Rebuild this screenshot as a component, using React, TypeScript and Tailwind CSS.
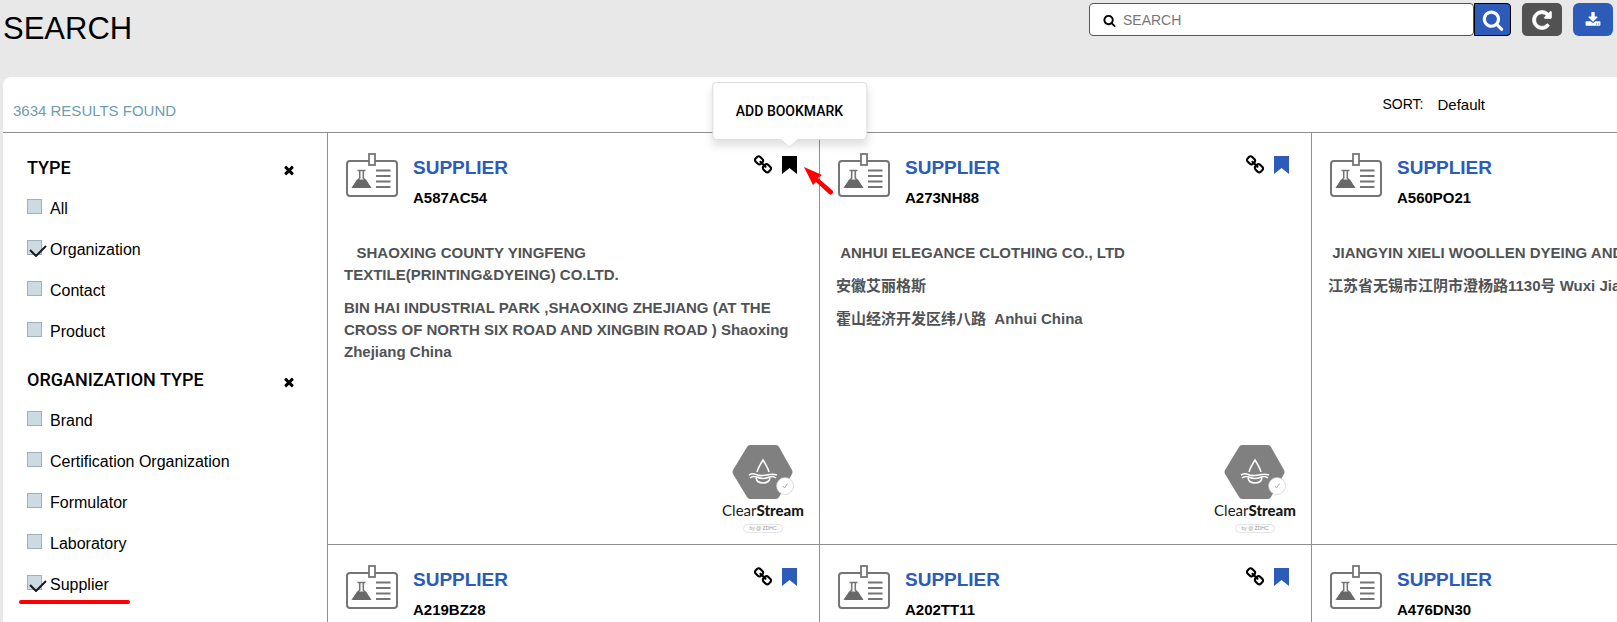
import type { ReactNode } from 'react';

const icons = {
  times:
    'M1490 1322q0 40-28 68l-136 136q-28 28-68 28t-68-28l-294-294-294 294q-28 28-68 28t-68-28l-136-136q-28-28-28-68t28-68l294-294-294-294q-28-28-28-68t28-68l136-136q28-28 68-28t68 28l294 294 294-294q28-28 68-28t68 28l136 136q28 28 28 68t-28 68l-294 294 294 294q28 28 28 68z',
  search:
    'M1216 832q0-185-131.5-316.5t-316.5-131.5-316.5 131.5-131.5 316.5 131.5 316.5 316.5 131.5 316.5-131.5 131.5-316.5zm512 832q0 52-38 90t-90 38q-54 0-90-38l-343-342q-179 124-399 124-143 0-273.5-55.5t-225-150-150-225-55.5-273.5 55.5-273.5 150-225 225-150 273.5-55.5 273.5 55.5 225 150 150 225 55.5 273.5q0 220-124 399l343 343q37 37 37 90z',
  reload:
    'M1664 256v448q0 26-19 45t-45 19h-448q-42 0-59-40-17-39 14-69l138-138q-148-137-349-137-104 0-198.5 40.5t-163.5 109.5-109.5 163.5-40.5 198.5 40.5 198.5 109.5 163.5 163.5 109.5 198.5 40.5q119 0 225-52t179-147q7-10 23-12 15 0 25 9l137 138q9 8 9.5 20.5t-7.5 22.5q-109 132-264 204.5t-327 72.5q-156 0-298-61t-245-164-164-245-61-298 61-298 164-245 245-164 298-61q147 0 284.5 55.5t244.5 156.5l130-129q29-31 70-14 39 17 39 59z',
  download:
    'M1344 1344q0-26-19-45t-45-19-45 19-19 45 19 45 45 19 45-19 19-45zm256 0q0-26-19-45t-45-19-45 19-19 45 19 45 45 19 45-19 19-45zm128-224v320q0 40-28 68t-68 28h-1472q-40 0-68-28t-28-68v-320q0-40 28-68t68-28h465l135 136q58 56 136 56t136-56l136-136h464q40 0 68 28t28 68zm-325-569q17 41-14 70l-448 448q-18 19-45 19t-45-19l-448-448q-31-29-14-70 17-39 59-39h256v-448q0-26 19-45t45-19h256q26 0 45 19t19 45v448h256q42 0 59 39z',
  link:
    'M1520 1216q0-40-28-68l-208-208q-28-28-68-28-42 0-72 32 3 3 19 18.5t21.5 21.5 15 19 13 25.5 3.5 27.5q0 40-28 68t-68 28q-15 0-27.5-3.5t-25.5-13-19-15-21.5-21.5-18.5-19q-33 31-33 73 0 40 28 68l206 207q27 27 68 27 40 0 68-26l147-146q28-28 28-67zm-703-705q0-40-28-68l-206-207q-28-28-68-28-39 0-68 27l-147 146q-28 28-28 67 0 40 28 68l208 208q27 27 68 27 42 0 72-31-3-3-19-18.5t-21.5-21.5-15-19-13-25.5-3.5-27.5q0-40 28-68t68-28q15 0 27.5 3.5t25.5 13 19 15 21.5 21.5 18.5 19q33-31 33-73zm895 705q0 120-85 203l-147 146q-83 83-203 83-121 0-204-85l-206-207q-83-83-83-203 0-123 88-209l-88-88q-86 88-208 88-120 0-204-84l-208-208q-84-84-84-204t85-203l147-146q83-83 203-83 121 0 204 85l206 207q83 83 83 203 0 123-88 209l88 88q86-88 208-88 120 0 204 84l208 208q84 84 84 204z',
};

const filters = [
  {
    title: 'TYPE',
    options: [
      { label: 'All' },
      { label: 'Organization', checked: true },
      { label: 'Contact' },
      { label: 'Product' },
    ],
  },
  {
    title: 'ORGANIZATION TYPE',
    options: [
      { label: 'Brand' },
      { label: 'Certification Organization' },
      { label: 'Formulator' },
      { label: 'Laboratory' },
      { label: 'Supplier', checked: true, marked: true },
    ],
  },
];

type Supplier = {
  id: string;
  lines?: string[];
  certified?: boolean;
  hovered?: boolean;
};

const suppliers: Supplier[] = [
  {
    id: 'A587AC54',
    lines: [
      '\u00a0\u00a0 SHAOXING COUNTY YINGFENG TEXTILE(PRINTING&DYEING) CO.LTD.',
      'BIN HAI INDUSTRIAL PARK ,SHAOXING ZHEJIANG (AT THE CROSS OF NORTH SIX ROAD AND XINGBIN ROAD ) Shaoxing Zhejiang China',
    ],
    certified: true,
    hovered: true,
  },
  {
    id: 'A273NH88',
    lines: ['\u00a0ANHUI ELEGANCE CLOTHING CO., LTD', '安徽艾丽格斯', '霍山经济开发区纬八路\u00a0 Anhui China'],
    certified: true,
  },
  {
    id: 'A560PO21',
    lines: ['\u00a0JIANGYIN XIELI WOOLLEN DYEING AND', '江苏省无锡市江阴市澄杨路1130号 Wuxi Jiangsu'],
  },
  { id: 'A219BZ28' },
  { id: 'A202TT11' },
  { id: 'A476DN30' },
];

function Icon({ name, className }: { name: keyof typeof icons; className: string }) {
  return (
    <svg viewBox="0 0 1792 1792" fill="currentColor" className={className} aria-hidden="true">
      <path d={icons[name]} />
    </svg>
  );
}

function BadgeIcon() {
  return (
    <svg viewBox="0 0 52 46" className="h-[46px] w-[52px] shrink-0" fill="none" stroke="#757575" aria-hidden="true">
      <rect x="1" y="8" width="50" height="35" rx="3" strokeWidth="2" />
      <rect x="23" y="1" width="6" height="11" fill="#fff" strokeWidth="1.8" />
      <path d="M11.500 17.500h8M13.700 18v7L7 34h17l-6.700-9v-7" strokeWidth="1.600" />
      <path d="M11 26.500h9L25 35H6z" fill="#686868" stroke="none" />
      <path d="M30 17.500h14.500M30 23h14.500M30 28.500h14.500M30 34h14.500" strokeWidth="2" />
    </svg>
  );
}

function ClearStreamLogo() {
  return (
    <div className="flex w-20 flex-col items-center">
      <svg viewBox="0 0 62 56" className="h-14 w-[62px]" fill="none" aria-hidden="true">
        <path d="M18 1h26q2 0 3 2l13 23q1 2 0 4L47 53q-1 2-3 2H18q-2 0-3-2L1 30q-1-2 0-4L15 3q1-2 3-2z" fill="#808080" />
        <g stroke="#fff" strokeWidth="1.500">
          <path d="M25 28q1-4 6-12 5 8 6 12M24 34q1 5 7 5t7-5" />
          <path d="M17 31q4-2 7-.5t7 1 7-1 7 .5M18 34q3-2.500 6.500-1t6.500 1.500 6.500-1.500 6.500 1" />
        </g>
        <circle cx="53" cy="42" r="8.500" fill="#fff" stroke="#bbb" strokeWidth=".5" />
        <path d="M51 42l1.500 2 3-4.500" stroke="#999" strokeWidth=".8" />
      </svg>
      <p className="font-['Lato'] text-[15px] leading-5 text-[#1a1a1a]">
        Clear<b className="font-black">Stream</b>
      </p>
      <p className="mt-1 rounded-full border border-[#e4e4e4] px-[5px] text-[5px] leading-[7px] text-[#999]">by @ ZDHC</p>
    </div>
  );
}

function Filter({ title, children }: { title: string; children: ReactNode }) {
  return (
    <fieldset className="pb-4">
      <div className="flex items-center justify-between pr-[31px]">
        <h2 className="font-['Roboto'] text-[18px] leading-6 font-medium">{title}</h2>
        <button type="button" aria-label={`Clear ${title}`} className="pt-1">
          <Icon name="times" className="size-[14px]" />
        </button>
      </div>
      <div className="mt-2">{children}</div>
    </fieldset>
  );
}

function Option({ label, checked, marked }: { label: string; checked?: boolean; marked?: boolean }) {
  return (
    <label className="relative flex h-[41px] items-center gap-2 text-base">
      <span className="relative mb-1 size-[15px]">
        <input
          type="checkbox"
          defaultChecked={checked}
          className="peer block size-[15px] appearance-none border border-[#9fb0ba] bg-[#ccdbe2]"
        />
        <svg
          viewBox="0 0 18 13"
          className="pointer-events-none absolute top-1 left-[2px] hidden h-[13px] w-[18px] peer-checked:block"
          fill="none"
          stroke="#1a1a1a"
          strokeWidth="2"
        >
          <path d="M1 6l6 6L17 2" />
        </svg>
      </span>
      {label}
      {marked && <span className="absolute bottom-px -left-2 h-1 w-[111px] rounded-full bg-[#fe0000]" />}
    </label>
  );
}

function BookmarkTip() {
  return (
    <>
      <div
        role="tooltip"
        className="absolute bottom-[34px] left-1/2 z-10 -translate-x-1/2 rounded-[4px] border border-[#ddd] bg-white px-[23px] py-4 font-['Roboto'] text-sm leading-6 font-medium whitespace-nowrap text-black shadow-[0_6px_8px_rgba(0,0,0,0.12)]"
      >
        ADD BOOKMARK
        <svg viewBox="0 0 18 9" className="absolute top-full left-1/2 h-[9px] w-[18px] -translate-x-1/2">
          <path d="M0 0l9 8 9-8" fill="#fff" stroke="#ddd" />
          <path d="M1 0h16" stroke="#fff" />
        </svg>
      </div>
      <svg viewBox="0 0 30 28" className="absolute top-[11px] left-[22px] z-10 h-7 w-[30px]">
        <path d="M0 0l18 8-4 3 14 12a1.800 1.800 0 0 1-3 4L12 15l-3 3z" fill="#fe0000" />
      </svg>
    </>
  );
}

function SupplierCard({ id, lines = [], certified, hovered }: Supplier) {
  return (
    <article className="flex h-[412px] flex-col border-b border-l border-[#8e9192] px-4 pt-5 pb-[11px]">
      <div className="flex">
        <div className="pl-[2px]">
          <BadgeIcon />
        </div>
        <div className="ml-[15px] grow pt-px">
          <h3 className="text-[19px] leading-7 font-bold text-[#2d5bb9]">SUPPLIER</h3>
          <p className="mt-1 text-[15px] leading-6 font-bold text-black">{id}</p>
        </div>
        <div className="flex items-start gap-[9px] pr-[6px]">
          <a href="#link" aria-label="Copy link" className="pt-[2px] text-black">
            <Icon name="link" className="size-5" />
          </a>
          <button type="button" aria-label="Add bookmark" className="relative mt-[3px]">
            <svg viewBox="0 0 15 18" className={hovered ? 'h-[18px] w-[15px] text-black' : 'h-[18px] w-[15px] text-[#2d5bb9]'}>
              <path d="M0 0h15v18l-7.500-6L0 18z" fill="currentColor" />
            </svg>
            {hovered && <BookmarkTip />}
          </button>
        </div>
      </div>
      <div className="mt-8 grow space-y-[11px] pr-2 text-[15px] leading-[22px] font-bold text-[#505355]">
        {lines.map((line) => (
          <p key={line}>{line}</p>
        ))}
      </div>
      {certified && (
        <div className="flex justify-end">
          <ClearStreamLogo />
        </div>
      )}
    </article>
  );
}

export default function App() {
  return (
    <div className="h-screen overflow-hidden bg-[#e8e8e8] pl-[3px] font-['Liberation_Sans','Noto_Sans_CJK_SC',sans-serif] text-black">
      <header className="flex h-[77px] items-start justify-between pt-[3px] pr-1">
        <h1 className="pt-1 text-[31px] leading-[44px]">SEARCH</h1>
        <form className="flex">
          <label className="flex h-[33px] w-[385px] items-center gap-[7px] rounded-[4px] border border-[#555] bg-white pt-[2px] pl-[13px]">
            <Icon name="search" className="size-[13px]" />
            <input type="search" aria-label="Search" placeholder="SEARCH" className="grow text-[14px] outline-none placeholder:text-[#777]" />
          </label>
          <button type="button" aria-label="Search" className="flex h-[33px] w-[37px] items-center justify-center rounded-r-[4px] border border-black bg-[#2d5bb9] text-white">
            <Icon name="search" className="size-[22px]" />
          </button>
          <button type="button" aria-label="Reload" className="ml-[11px] flex h-[33px] w-10 items-center justify-center rounded-[5px] bg-[#525252] text-white">
            <Icon name="reload" className="size-[22px] stroke-white stroke-[60]" />
          </button>
          <button type="button" aria-label="Download" className="ml-[11px] flex h-[33px] w-10 items-center justify-center rounded-[6px] bg-[#2d5bb9] text-white">
            <Icon name="download" className="size-4" />
          </button>
        </form>
      </header>

      <main className="rounded-tl-[8px] bg-white">
        <div className="flex h-14 items-center justify-between border-b border-[#8e9192] pr-[132px] pl-[10px]">
          <p className="pt-[14px] text-[15px] text-[#6d9dae]">3634 RESULTS FOUND</p>
          <div className="flex items-center gap-[14px]">
            <span className="text-[14px]">SORT:</span>
            <button type="button" className="pt-[2px] text-[15px]">Default</button>
          </div>
        </div>

        <div className="flex">
          <aside className="w-[324px] shrink-0 pt-[23px] pl-6">
            {filters.map((filter) => (
              <Filter key={filter.title} title={filter.title}>
                {filter.options.map((option) => (
                  <Option key={option.label} {...option} />
                ))}
              </Filter>
            ))}
          </aside>
          <section className="grid grid-cols-[repeat(3,492px)]">
            {suppliers.map((supplier) => (
              <SupplierCard key={supplier.id} {...supplier} />
            ))}
          </section>
        </div>
      </main>
    </div>
  );
}
